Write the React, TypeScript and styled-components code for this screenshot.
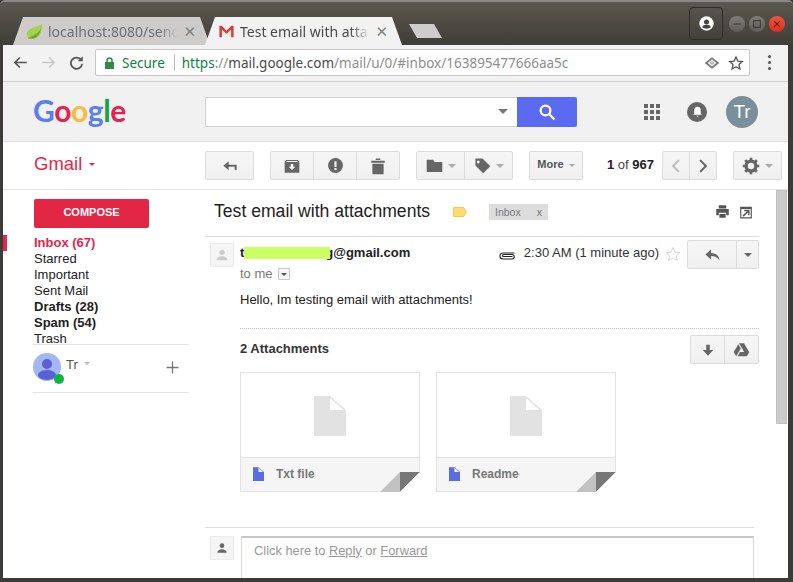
import React from 'react';
import styled, { createGlobalStyle } from 'styled-components';

const GlobalStyle = createGlobalStyle`
  html, body {
    margin: 0;
    padding: 0;
    background: #3c3b37;
  }
  * {
    box-sizing: border-box;
  }
`;

const UI_FONT = `"Noto Sans", "DejaVu Sans", sans-serif`;
const PAGE_FONT = `"Liberation Sans", Arial, sans-serif`;

const Frame = styled.div`
  width: 793px;
  height: 582px;
  overflow: hidden;
  background: #3c3b37;
  border-top: 2px solid #8a8985;
  border-radius: 5px 5px 0 0;
  display: flex;
  flex-direction: column;
  padding: 0 5px 4px 3px;
  font-family: ${PAGE_FONT};
`;

/* ---------- title bar ---------- */

const TitleBar = styled.div`
  height: 43px;
  flex: none;
  margin: 0 -5px 0 -3px;
  padding: 0 8px 0 13px;
  background: linear-gradient(#5a5850, #3e3d37);
  display: flex;
  align-items: flex-end;
`;

const Tab = styled.div<{ $active?: boolean }>`
  width: 197px;
  height: 28px;
  margin-right: -5px;
  padding: 0 14px 0 13px;
  display: flex;
  align-items: center;
  gap: 5px;
  font-family: ${UI_FONT};
  font-size: 14px;
  color: ${(p) => (p.$active ? '#4a4a4a' : '#6b6f78')};
  background: ${(p) => (p.$active ? '#f2f2f2' : '#cdccca')};
  clip-path: polygon(0 100%, 10px 0, 187px 0, 197px 100%);
  position: relative;
  z-index: ${(p) => (p.$active ? 2 : 1)};
`;

const TabTitle = styled.span`
  flex: 1;
  overflow: hidden;
  white-space: nowrap;
  -webkit-mask-image: linear-gradient(to right, #000 85%, transparent);
  mask-image: linear-gradient(to right, #000 85%, transparent);
`;

const TabClose = styled.span`
  flex: none;
  font-size: 15px;
  color: #808080;
  line-height: 1;
`;

const NewTab = styled.div`
  width: 33px;
  height: 14px;
  margin: 0 0 7px 12px;
  background: #cdccca;
  clip-path: polygon(0 0, 25px 0, 33px 100%, 8px 100%);
`;

const TitleSpacer = styled.div`
  flex: 1;
`;

const ProfileButton = styled.div`
  width: 34px;
  height: 33px;
  margin: 0 6px 5px 0;
  border: 1px solid #2f2e2a;
  border-radius: 4px;
  display: flex;
  align-items: center;
  justify-content: center;
`;

const WindowButtons = styled.div`
  display: flex;
  gap: 4px;
  align-self: flex-start;
  margin-top: 14px;
`;

const WindowButton = styled.div<{ $close?: boolean }>`
  width: 16px;
  height: 16px;
  border-radius: 50%;
  background: ${(p) =>
    p.$close
      ? 'linear-gradient(#f0533f, #d9301f)'
      : 'linear-gradient(#7f7e78, #5d5c56)'};
  display: flex;
  align-items: center;
  justify-content: center;
`;

/* ---------- browser toolbar ---------- */

const BrowserBar = styled.div`
  height: 37px;
  flex: none;
  background: #f2f2f2;
  border-bottom: 1px solid #cfcfcf;
  padding: 4px 0 5px 10px;
  display: flex;
  align-items: center;
`;

const NavIcons = styled.div`
  width: 82px;
  flex: none;
  display: flex;
  align-items: center;
  gap: 13px;
`;

const UrlBar = styled.div`
  width: 655px;
  height: 27px;
  flex: none;
  background: #fff;
  border: 1px solid #c6c6c6;
  border-radius: 2px;
  padding: 0 5px 0 9px;
  display: flex;
  align-items: center;
  font-family: ${UI_FONT};
  font-size: 13.5px;
`;

const Secure = styled.span`
  color: #0b8043;
  margin: 0 9px 0 8px;
`;

const UrlDivider = styled.span`
  width: 1px;
  height: 15px;
  background: #b5b5b5;
  margin-right: 7px;
`;

const UrlText = styled.span`
  flex: 1;
  color: #8e8e8e;
  white-space: nowrap;
  b {
    font-weight: 400;
    color: #4a4a4a;
  }
  i {
    font-style: normal;
    color: #0b8043;
  }
`;

const UrlIcons = styled.div`
  display: flex;
  align-items: center;
  gap: 9px;
`;

const MenuDots = styled.div`
  margin-left: 18px;
  display: flex;
  flex-direction: column;
  gap: 3px;
  span {
    width: 3px;
    height: 3px;
    border-radius: 50%;
    background: #555;
  }
`;

/* ---------- google header ---------- */

const GoogleHeader = styled.div`
  height: 60px;
  flex: none;
  background: #f1f1f1;
  border-bottom: 1px solid #e0e0e0;
  padding: 0 30px 0 30px;
  display: flex;
  align-items: center;
`;

const Logo = styled.div`
  width: 172px;
  flex: none;
  font-family: Lato, ${PAGE_FONT};
  font-size: 30px;
  font-weight: 700;
  letter-spacing: -0.4px;
  line-height: 1;
  padding-bottom: 3px;
`;

const LogoLetter = styled.span<{ $color: string }>`
  color: ${(p) => p.$color};
`;

const SearchBox = styled.div`
  width: 312px;
  height: 30px;
  flex: none;
  background: #fff;
  border: 1px solid #d0d0d0;
  border-right: none;
  padding-right: 9px;
  display: flex;
  align-items: center;
  justify-content: flex-end;
`;

const Caret = styled.span<{ $size?: number; $color?: string }>`
  display: inline-block;
  flex: none;
  width: 0;
  height: 0;
  border-left: ${(p) => p.$size ?? 4}px solid transparent;
  border-right: ${(p) => p.$size ?? 4}px solid transparent;
  border-top: ${(p) => p.$size ?? 4}px solid ${(p) => p.$color ?? '#888'};
`;

const SearchButton = styled.div`
  width: 60px;
  height: 30px;
  flex: none;
  background: #5b6bf1;
  border-radius: 0 2px 2px 0;
  display: flex;
  align-items: center;
  justify-content: center;
`;

const HeaderRight = styled.div`
  flex: 1;
  display: flex;
  align-items: center;
  justify-content: flex-end;
`;

const AppsGrid = styled.div`
  display: grid;
  grid-template-columns: repeat(3, 4px);
  grid-auto-rows: 4px;
  gap: 2px;
  margin-right: 27px;
  span {
    background: #666;
  }
`;

const Bell = styled.div`
  width: 20px;
  height: 20px;
  border-radius: 50%;
  background: #666;
  margin-right: 19px;
  display: flex;
  align-items: center;
  justify-content: center;
`;

const UserCircle = styled.div`
  width: 32px;
  height: 32px;
  border-radius: 50%;
  background: #78909c;
  color: #fff;
  font-size: 19px;
  display: flex;
  align-items: center;
  justify-content: center;
`;

/* ---------- gmail toolbar ---------- */

const GmailBar = styled.div`
  height: 48px;
  flex: none;
  background: #fff;
  border-bottom: 1px solid #e3e3e3;
  padding: 0 6px 0 31px;
  display: flex;
  align-items: center;
`;

const GmailTitle = styled.div`
  width: 171px;
  flex: none;
  padding-bottom: 3px;
  color: #e8264a;
  font-size: 18.5px;
  display: flex;
  align-items: center;
  gap: 7px;
`;

const Group = styled.div<{ $ml?: number }>`
  height: 29px;
  flex: none;
  margin-left: ${(p) => p.$ml ?? 0}px;
  display: flex;
  border: 1px solid #dcdcdc;
  border-radius: 2px;
  background: linear-gradient(#f6f6f6, #f0f0f0);
`;

const GroupButton = styled.div<{ $w: number }>`
  width: ${(p) => p.$w}px;
  display: flex;
  align-items: center;
  justify-content: center;
  gap: 5px;
  & + & {
    border-left: 1px solid #dcdcdc;
  }
`;

const MoreLabel = styled.span`
  color: #555;
  font-size: 11px;
  font-weight: 700;
  margin-bottom: 3px;
`;

const PageCount = styled.div`
  margin-left: 24px;
  width: 55px;
  flex: none;
  padding-bottom: 3px;
  font-size: 13px;
  color: #444;
  white-space: nowrap;
  b {
    color: #222;
  }
`;

/* ---------- body ---------- */

const Body = styled.div`
  flex: 1;
  min-height: 0;
  display: flex;
  background: #fff;
`;

const Sidebar = styled.div`
  width: 202px;
  flex: none;
  padding: 9px 16px 0 0;
`;

const Compose = styled.div`
  width: 115px;
  height: 29px;
  margin-left: 31px;
  padding-bottom: 3px;
  background: linear-gradient(#e62546, #df2742);
  border-radius: 2px;
  color: #fff;
  font-size: 11px;
  font-weight: 700;
  display: flex;
  align-items: center;
  justify-content: center;
`;

const NavList = styled.div`
  margin-top: 7px;
`;

const NavItem = styled.div<{ $active?: boolean; $bold?: boolean }>`
  height: 16px;
  line-height: 16px;
  font-size: 13px;
  padding-left: ${(p) => (p.$active ? 27 : 31)}px;
  border-left: ${(p) => (p.$active ? '4px solid #e8264a' : 'none')};
  font-weight: ${(p) => (p.$active || p.$bold ? 700 : 400)};
  color: ${(p) => (p.$active ? '#e8264a' : '#222')};
  &:last-child {
    height: 13px;
  }
`;

const ChatUser = styled.div`
  margin-left: 30px;
  height: 49px;
  border-top: 1px solid #e3e3e3;
  border-bottom: 1px solid #e3e3e3;
  padding: 8px 10px 0 0;
  display: flex;
  align-items: flex-start;
`;

const ChatAvatar = styled.div`
  width: 28px;
  height: 28px;
  flex: none;
  border-radius: 50%;
  background: #a3b6f5;
  position: relative;
  margin-right: 5px;
`;

const OnlineDot = styled.span`
  position: absolute;
  right: -3px;
  bottom: -3px;
  width: 10px;
  height: 10px;
  border-radius: 50%;
  background: #0db542;
`;

const ChatName = styled.span`
  font-size: 13px;
  color: #555;
  margin: 4px 6px 0 0;
`;

const ChatCaret = styled.span`
  margin-top: 9px;
  display: flex;
`;

const PlusIcon = styled.span`
  margin-left: auto;
  margin-top: 8px;
  display: flex;
`;

const Main = styled.div`
  flex: 1;
  min-width: 0;
  overflow: hidden;
  padding-right: 17px;
`;

const SubjectRow = styled.div`
  height: 47px;
  border-bottom: 1px solid #dedede;
  padding: 0 6px 3px 9px;
  display: flex;
  align-items: center;
`;

const Subject = styled.div`
  font-size: 17.6px;
  color: #222;
  white-space: nowrap;
  width: 239px;
  flex: none;
`;

const LabelChip = styled.div`
  width: 59px;
  height: 16px;
  margin-left: 22px;
  padding: 0 6px;
  background: #dddddd;
  color: #777;
  font-size: 10.5px;
  display: flex;
  align-items: center;
  justify-content: space-between;
`;

const SubjectIcons = styled.div`
  margin-left: auto;
  display: flex;
  align-items: center;
  gap: 9px;
`;

const MessageHead = styled.div`
  display: flex;
  padding: 3px 0 0 5px;
`;

const PersonBox = styled.div<{ $top?: number }>`
  width: 24px;
  height: 24px;
  flex: none;
  margin-top: ${(p) => p.$top ?? 0}px;
  background: #f5f5f5;
  border: 1px solid #ececec;
  display: flex;
  align-items: center;
  justify-content: center;
`;

const MessageBody = styled.div`
  flex: 1;
  min-width: 0;
  margin-left: 6px;
`;

const SenderRow = styled.div`
  height: 26px;
  display: flex;
  align-items: flex-start;
`;

const Sender = styled.div`
  position: relative;
  margin-top: 5px;
  font-size: 13px;
  font-weight: 700;
  color: #222;
  white-space: nowrap;
`;

const Redaction = styled.span`
  position: absolute;
  left: 4px;
  top: 2px;
  width: 86px;
  height: 12px;
  background: #ccff66;
`;

const TimeBlock = styled.div`
  margin-left: auto;
  display: flex;
  align-items: flex-start;
  font-size: 13px;
  color: #333;
  white-space: nowrap;
`;

const ClipIcon = styled.span`
  margin-top: 10px;
`;

const TimeText = styled.span`
  margin: 5px 0 0 8px;
`;

const StarIcon = styled.span`
  margin: 6px 6px 0;
`;

const ToRow = styled.div`
  display: flex;
  align-items: center;
  gap: 5px;
  font-size: 13px;
  color: #777;
  height: 14px;
`;

const SmallMenu = styled.span`
  width: 12px;
  height: 12px;
  border: 1px solid #c8c8c8;
  border-radius: 1px;
  background: #f6f6f6;
  display: flex;
  align-items: center;
  justify-content: center;
  margin-top: 2px;
`;

const Greeting = styled.div`
  margin-top: 12px;
  height: 37px;
  font-size: 13px;
  line-height: 15px;
  color: #222;
  border-bottom: 1px dotted #c4c4c4;
`;

const AttachHead = styled.div`
  height: 43px;
  padding: 6px 0 8px;
  display: flex;
  align-items: center;
  justify-content: space-between;
`;

const AttachTitle = styled.div`
  font-size: 13px;
  font-weight: 700;
  color: #333;
  margin-bottom: 2px;
`;

const Cards = styled.div`
  display: flex;
  gap: 16px;
`;

const Card = styled.div`
  width: 180px;
  height: 120px;
  border: 1px solid #e2e2e2;
  display: flex;
  flex-direction: column;
  position: relative;
`;

const Preview = styled.div`
  height: 85px;
  flex: none;
  display: flex;
  justify-content: center;
  padding-top: 23px;
  border-bottom: 1px solid #e2e2e2;
`;

const CardFooter = styled.div`
  flex: 1;
  background: #f5f5f5;
  padding: 0 0 2px 12px;
  display: flex;
  align-items: center;
  gap: 12px;
  font-size: 12px;
  font-weight: 700;
  color: #777;
`;

const Fold = styled.svg`
  position: absolute;
  right: -1px;
  bottom: -1px;
`;

const ReplySection = styled.div`
  margin-top: 35px;
  margin-right: 5px;
  border-top: 1px solid #dedede;
  display: flex;
  padding: 8px 0 0 5px;
  gap: 7px;
`;

const ReplyBox = styled.div`
  flex: 1;
  height: 60px;
  border: 1px solid #d8d8d8;
  border-top: 2px solid #c6c6c6;
  padding: 5px 12px;
  font-size: 12.85px;
  color: #999;
  u {
    text-underline-offset: 1px;
  }
`;

const Scrollbar = styled.div`
  width: 12px;
  flex: none;
  padding-right: 1px;
  background: #fff;
`;

const ScrollThumb = styled.div`
  height: 234px;
  background: #cbcbcb;
  border: 1px solid #c0c0c0;
`;

/* ---------- icons ---------- */

const Svg: React.FC<{ w: number; h?: number; vb?: string; children: React.ReactNode }> = ({
  w,
  h,
  vb,
  children,
}) => (
  <svg width={w} height={h ?? w} viewBox={vb ?? '0 0 24 24'} style={{ flex: 'none', display: 'block' }}>
    {children}
  </svg>
);

const DocIcon: React.FC<{ color: string; w: number; h: number }> = ({ color, w, h }) => (
  <Svg w={w} h={h} vb="0 0 32 40">
    <path d="M0 0H16L32 14V40H0Z" fill={color} />
    <path d="M16 2L29.5 14H16Z" fill="#fff" />
  </Svg>
);

const Person = ({ size, color }: { size: number; color: string }) => (
  <Svg w={size}>
    <circle cx="12" cy="8" r="4" fill={color} />
    <path d="M4 20c0-4 4-6 8-6s8 2 8 6z" fill={color} />
  </Svg>
);

const AttachmentCard: React.FC<{ name: string }> = ({ name }) => (
  <Card>
    <Preview>
      <DocIcon color="#e2e2e2" w={32} h={40} />
    </Preview>
    <CardFooter>
      <DocIcon color="#5b6be0" w={11} h={14} />
      <span>{name}</span>
    </CardFooter>
    <Fold width="40" height="20" viewBox="0 0 40 20">
      <path d="M0 20L20 0V20Z" fill="#c2c2c2" />
      <path d="M20 0H40L20 20Z" fill="#777" />
      <path d="M20 20L40 0V20Z" fill="#fff" />
    </Fold>
  </Card>
);

const App: React.FC = () => {
  return (
    <Frame>
      <GlobalStyle />
      <TitleBar>
        <Tab>
          <Svg w={17}>
            <path d="M23 1C23 14 18 22 9 22C4 22 1 19 1 15C2 7 13 7 23 1Z" fill="#a5d24a" />
            <path d="M2 21C8 19 16 16 21 8C20 16 14 23 8 22C6 22 4 22 2 21Z" fill="#6fa82f" />
          </Svg>
          <TabTitle>localhost:8080/send</TabTitle>
          <TabClose>✕</TabClose>
        </Tab>
        <Tab $active>
          <Svg w={17}>
            <path d="M2 4H22V20H2Z" fill="#eee" />
            <path d="M2 4H5L12 11L19 4H22V20H18.5V9L12 15L5.5 9V20H2Z" fill="#d93a36" />
          </Svg>
          <TabTitle>Test email with atta</TabTitle>
          <TabClose>✕</TabClose>
        </Tab>
        <NewTab />
        <TitleSpacer />
        <ProfileButton>
          <Svg w={15}>
            <circle cx="12" cy="12" r="11.5" fill="#fff" />
            <circle cx="12" cy="9.5" r="4" fill="#45443e" />
            <path d="M5 18c1-3 4-4 7-4s6 1 7 4c-4 3-10 3-14 0z" fill="#45443e" />
          </Svg>
        </ProfileButton>
        <WindowButtons>
          <WindowButton>
            <Svg w={10}>
              <path d="M3 12H21" stroke="#3a3935" strokeWidth="2.5" />
            </Svg>
          </WindowButton>
          <WindowButton>
            <Svg w={10}>
              <rect x="4" y="4" width="16" height="16" fill="none" stroke="#3a3935" strokeWidth="2.5" />
            </Svg>
          </WindowButton>
          <WindowButton $close>
            <Svg w={10}>
              <path d="M5 5L19 19M19 5L5 19" stroke="#6d1810" strokeWidth="2.5" />
            </Svg>
          </WindowButton>
        </WindowButtons>
      </TitleBar>

      <BrowserBar>
        <NavIcons>
          <Svg w={15}>
            <path d="M22 12H4M11 4L3 12L11 20" fill="none" stroke="#555" strokeWidth="2.6" />
          </Svg>
          <Svg w={15}>
            <path d="M2 12H20M13 4L21 12L13 20" fill="none" stroke="#c8c8c8" strokeWidth="2.6" />
          </Svg>
          <Svg w={15}>
            <path d="M19.5 8A9 9 0 1 0 21 14" fill="none" stroke="#555" strokeWidth="2.8" />
            <path d="M22 2V10H14Z" fill="#555" />
          </Svg>
        </NavIcons>
        <UrlBar>
          <Svg w={9} h={12} vb="0 0 18 24">
            <path d="M4 10V7a5 5 0 0 1 10 0v3" fill="none" stroke="#2e8b46" strokeWidth="3" />
            <rect x="0" y="10" width="18" height="14" fill="#2e8b46" />
          </Svg>
          <Secure>Secure</Secure>
          <UrlDivider />
          <UrlText>
            <i>https</i>://<b>mail.google.com</b>/mail/u/0/#inbox/163895477666aa5c
          </UrlText>
          <UrlIcons>
            <Svg w={14}>
              <path d="M12 4L22 12L12 20L2 12Z" fill="none" stroke="#777" strokeWidth="3" />
              <path d="M12 8L17 12L12 16L7 12Z" fill="#bbb" />
            </Svg>
            <Svg w={16}>
              <path
                d="M12 3L14.8 9.2L21.5 9.9L16.5 14.4L17.9 21L12 17.6L6.1 21L7.5 14.4L2.5 9.9L9.2 9.2Z"
                fill="none"
                stroke="#555"
                strokeWidth="2"
              />
            </Svg>
          </UrlIcons>
        </UrlBar>
        <MenuDots>
          <span />
          <span />
          <span />
        </MenuDots>
      </BrowserBar>

      <GoogleHeader>
        <Logo>
          <LogoLetter $color="#5b7ff0">G</LogoLetter>
          <LogoLetter $color="#ea1f4e">o</LogoLetter>
          <LogoLetter $color="#f9bc3a">o</LogoLetter>
          <LogoLetter $color="#5b7ff0">g</LogoLetter>
          <LogoLetter $color="#16a34a">l</LogoLetter>
          <LogoLetter $color="#ea1f4e">e</LogoLetter>
        </Logo>
        <SearchBox>
          <Caret $size={5} $color="#777" />
        </SearchBox>
        <SearchButton>
          <Svg w={18}>
            <circle cx="10" cy="10" r="6.5" fill="none" stroke="#fff" strokeWidth="3" />
            <path d="M15 15L22 22" stroke="#fff" strokeWidth="3.2" />
          </Svg>
        </SearchButton>
        <HeaderRight>
          <AppsGrid>
            {Array.from({ length: 9 }).map((_, i) => (
              <span key={i} />
            ))}
          </AppsGrid>
          <Bell>
            <Svg w={13}>
              <path d="M12 3c4 0 6 3 6 7v5l2 3H4l2-3v-5c0-4 2-7 6-7z" fill="#fff" />
              <path d="M10 20h4a2 2 0 0 1-4 0z" fill="#fff" />
            </Svg>
          </Bell>
          <UserCircle>Tr</UserCircle>
        </HeaderRight>
      </GoogleHeader>

      <GmailBar>
        <GmailTitle>
          Gmail
          <Caret $size={3.5} $color="#e8264a" />
        </GmailTitle>
        <Group>
          <GroupButton $w={47}>
            <Svg w={16}>
              <path d="M10 5V10H22V18H19V13H10V18L2 11.5Z" fill="#666" />
            </Svg>
          </GroupButton>
        </Group>
        <Group $ml={16}>
          <GroupButton $w={42}>
            <Svg w={16}>
              <path d="M3 3H21L23 6V22H1V6ZM4 4.5L3 6H21L20 4.5Z" fill="#666" fillRule="evenodd" />
              <path d="M10 9H14V13H17L12 18L7 13H10Z" fill="#f3f3f3" />
            </Svg>
          </GroupButton>
          <GroupButton $w={43}>
            <Svg w={17}>
              <circle cx="12" cy="12" r="10.5" fill="#666" />
              <rect x="10.5" y="6" width="3" height="8" fill="#f3f3f3" />
              <rect x="10.5" y="15.5" width="3" height="3" fill="#f3f3f3" />
            </Svg>
          </GroupButton>
          <GroupButton $w={43}>
            <Svg w={18}>
              <path d="M3 5H21V7.5H3ZM9 2H15V4H9ZM4.5 9H19.5V23H4.5Z" fill="#666" />
            </Svg>
          </GroupButton>
        </Group>
        <Group $ml={16}>
          <GroupButton $w={47}>
            <Svg w={17}>
              <path d="M1 4H10L12 7H23V21H1Z" fill="#666" />
            </Svg>
            <Caret $color="#aaa" />
          </GroupButton>
          <GroupButton $w={48}>
            <Svg w={17}>
              <path d="M2 2H12L23 13L13 23L2 12ZM6 5a2 2 0 1 0 .01 0Z" fill="#666" fillRule="evenodd" />
            </Svg>
            <Caret $color="#aaa" />
          </GroupButton>
        </Group>
        <Group $ml={16}>
          <GroupButton $w={52}>
            <MoreLabel>More</MoreLabel>
            <Caret $size={3.5} $color="#aaa" />
          </GroupButton>
        </Group>
        <PageCount>
          <b>1</b> of <b>967</b>
        </PageCount>
        <Group>
          <GroupButton $w={26}>
            <Svg w={14}>
              <path d="M17 2L7 12L17 22" fill="none" stroke="#bbb" strokeWidth="3.4" />
            </Svg>
          </GroupButton>
          <GroupButton $w={27}>
            <Svg w={14}>
              <path d="M7 2L17 12L7 22" fill="none" stroke="#666" strokeWidth="3.4" />
            </Svg>
          </GroupButton>
        </Group>
        <Group $ml={16}>
          <GroupButton $w={47}>
            <Svg w={18}>
              <circle cx="12" cy="12" r="6.5" fill="none" stroke="#666" strokeWidth="4.5" />
              <path
                d="M12 1V23M1 12H23M4.2 4.2L19.8 19.8M19.8 4.2L4.2 19.8"
                stroke="#666"
                strokeWidth="3.6"
                strokeDasharray="4 14"
              />
            </Svg>
            <Caret $color="#aaa" />
          </GroupButton>
        </Group>
      </GmailBar>

      <Body>
        <Sidebar>
          <Compose>COMPOSE</Compose>
          <NavList>
            <NavItem $active>Inbox (67)</NavItem>
            <NavItem>Starred</NavItem>
            <NavItem>Important</NavItem>
            <NavItem>Sent Mail</NavItem>
            <NavItem $bold>Drafts (28)</NavItem>
            <NavItem $bold>Spam (54)</NavItem>
            <NavItem>Trash</NavItem>
          </NavList>
          <ChatUser>
            <ChatAvatar>
              <svg width="28" height="28" viewBox="0 0 28 28" style={{ display: 'block' }}>
                <circle cx="14" cy="11" r="5" fill="#5b5fd6" />
                <ellipse cx="14" cy="22" rx="9" ry="5" fill="#5b5fd6" />
              </svg>
              <OnlineDot />
            </ChatAvatar>
            <ChatName>Tr</ChatName>
            <ChatCaret>
              <Caret $size={3.5} $color="#bbb" />
            </ChatCaret>
            <PlusIcon>
              <Svg w={13}>
                <path d="M12 1V23M1 12H23" stroke="#777" strokeWidth="2.4" />
              </Svg>
            </PlusIcon>
          </ChatUser>
        </Sidebar>

        <Main>
          <SubjectRow>
            <Subject>Test email with attachments</Subject>
            <Svg w={14} h={10} vb="0 0 14 10">
              <path d="M0.5 0.5H10.5L13.5 5L10.5 9.5H0.5Z" fill="#ffdc73" stroke="#f2c94c" />
            </Svg>
            <LabelChip>
              <span>Inbox</span>
              <span>x</span>
            </LabelChip>
            <SubjectIcons>
              <Svg w={15}>
                <path d="M6 2H18V7H6ZM2 8H22V18H18V14H6V18H2ZM7 16H17V22H7Z" fill="#555" />
              </Svg>
              <Svg w={14}>
                <path d="M2 3H22V23H2ZM4 7V21H20V7Z" fill="#555" fillRule="evenodd" />
                <path d="M9 8H18V17H15.5V12.5L8 20L6 18L13.5 10.5H9Z" fill="#555" />
              </Svg>
            </SubjectIcons>
          </SubjectRow>

          <MessageHead>
            <PersonBox $top={3}>
              <Person size={16} color="#ccc" />
            </PersonBox>
            <MessageBody>
              <SenderRow>
                <Sender>
                  txxxxxxxxxxrig@gmail.com
                  <Redaction />
                </Sender>
                <TimeBlock>
                  <ClipIcon>
                    <Svg w={18} h={10} vb="0 0 36 20">
                      <path
                        d="M33 6H10a6 6 0 0 0 0 12H28a4 4 0 0 0 0-9H11a2 2 0 0 0 0 4H29"
                        fill="none"
                        stroke="#222"
                        strokeWidth="2.2"
                      />
                    </Svg>
                  </ClipIcon>
                  <TimeText>2:30 AM (1 minute ago)</TimeText>
                  <StarIcon>
                    <Svg w={16}>
                      <path
                        d="M12 2L15 9.2L22.5 9.8L16.8 14.6L18.6 22L12 18L5.4 22L7.2 14.6L1.5 9.8L9 9.2Z"
                        fill="none"
                        stroke="#d5d5d5"
                        strokeWidth="1.4"
                      />
                    </Svg>
                  </StarIcon>
                  <Group>
                    <GroupButton $w={48}>
                      <Svg w={17}>
                        <path d="M10 5V10C16 10 21 13 22 20C19 16 15 14 10 14V19L2 12Z" fill="#666" />
                      </Svg>
                    </GroupButton>
                    <GroupButton $w={22}>
                      <Caret $color="#666" />
                    </GroupButton>
                  </Group>
                </TimeBlock>
              </SenderRow>
              <ToRow>
                <span>to me</span>
                <SmallMenu>
                  <Caret $size={3} $color="#555" />
                </SmallMenu>
              </ToRow>
              <Greeting>Hello, Im testing email with attachments!</Greeting>
              <AttachHead>
                <AttachTitle>2 Attachments</AttachTitle>
                <Group>
                  <GroupButton $w={33}>
                    <Svg w={14}>
                      <path d="M9 3H15V12H21L12 22L3 12H9Z" fill="#666" />
                    </Svg>
                  </GroupButton>
                  <GroupButton $w={34}>
                    <Svg w={17}>
                      <path d="M8.5 3H15.5L23 16H16Z" fill="#666" />
                      <path d="M7.5 4.5L11 10.5L4.5 21.5L1 15.5Z" fill="#666" />
                      <path d="M6.5 21.5L10 15.5H23L19.5 21.5Z" fill="#666" />
                    </Svg>
                  </GroupButton>
                </Group>
              </AttachHead>
              <Cards>
                <AttachmentCard name="Txt file" />
                <AttachmentCard name="Readme" />
              </Cards>
            </MessageBody>
          </MessageHead>

          <ReplySection>
            <PersonBox>
              <Person size={14} color="#666" />
            </PersonBox>
            <ReplyBox>
              Click here to <u>Reply</u> or <u>Forward</u>
            </ReplyBox>
          </ReplySection>
        </Main>
        <Scrollbar>
          <ScrollThumb />
        </Scrollbar>
      </Body>
    </Frame>
  );
};

export default App;
